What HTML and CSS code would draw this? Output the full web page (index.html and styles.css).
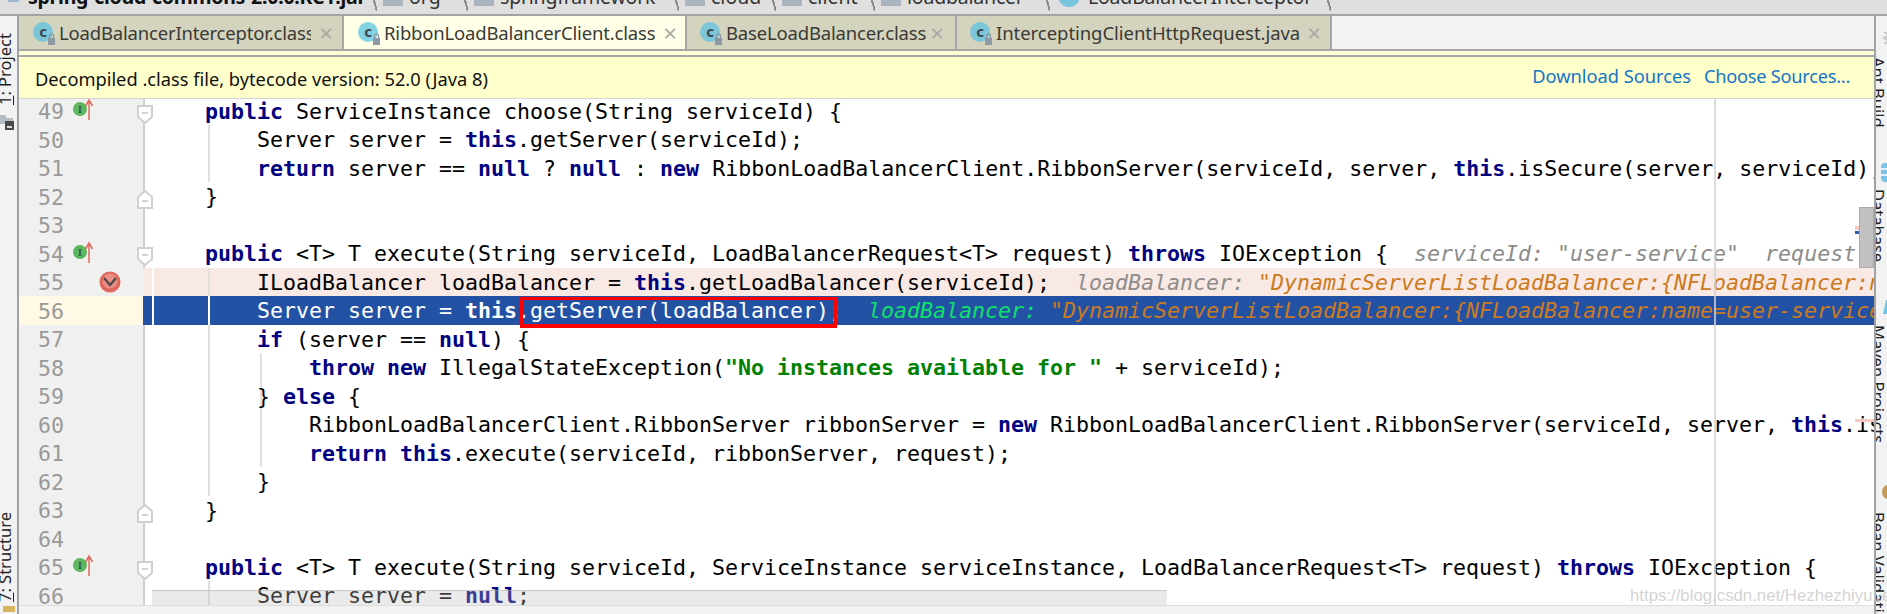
FILE: index.html
```html
<!DOCTYPE html>
<html lang="en">
<head>
<meta charset="utf-8">
<title>RibbonLoadBalancerClient.class</title>
<link rel="stylesheet" href="styles.css">
</head>
<body>
<div class="app">
  <nav class="crumbs">
    <div class="crumb-row">
      <svg class="crumb-jar" width="14" height="14" viewBox="0 0 14 14"><rect x="1" y="1" width="11" height="12" fill="#9fb7cf"/><rect x="4" y="3" width="5" height="8" fill="#e8eef4"/></svg>
      <b class="crumb-root">spring-cloud-commons-2.0.0.RC1.jar</b>
      <i class="sep s1"></i>
      <i class="fold-ic"></i><span class="crumb c-org">org</span>
      <i class="sep s2"></i>
      <i class="fold-ic"></i><span class="crumb c-spring">springframework</span>
      <i class="sep s3"></i>
      <i class="fold-ic"></i><span class="crumb c-cloud">cloud</span>
      <i class="sep s4"></i>
      <i class="fold-ic"></i><span class="crumb c-client">client</span>
      <i class="sep s5"></i>
      <i class="fold-ic"></i><span class="crumb c-lb">loadbalancer</span>
      <i class="sep s6"></i>
      <i class="class-ic"></i><span class="crumb c-int">LoadBalancerInterceptor</span>
      <i class="sep s7"></i>
    </div>
  </nav>
  <div class="main">
    <aside class="lstrip">
      <span class="vtext vleft v-project"><u>1</u>: Project</span>
      <svg class="proj-ic" width="15" height="18" viewBox="0 0 15 18"><path d="M0 3h5l2 3h6v6H0z" fill="#b7bdc4"/><rect x="5" y="9" width="9" height="9" fill="#4a4a4a"/><rect x="7" y="14" width="5" height="2" fill="#ddd"/></svg>
      <span class="vtext vleft v-structure"><u>7</u>: Structure</span>
      <svg class="struct-ic" width="14" height="6" viewBox="0 0 14 6"><rect x="1" y="0" width="12" height="6" fill="#d9b45c"/></svg>
    </aside>
    <section class="center">
      <div class="tabs">
        <div class="tab tab-1">
          <svg class="cls" width="26" height="24" viewBox="0 0 26 24"><circle cx="10" cy="10" r="10" fill="#7cc6da"/><text x="10" y="15" class="cls-c">c</text><rect x="15" y="16" width="7" height="7" fill="#8d9aa6"/><path d="M16.500 16v-2a2 2 0 0 1 4 0v2" fill="none" stroke="#8d9aa6" stroke-width="1.300"/></svg>
          <span class="tab-name name-1">LoadBalancerInterceptor.class</span>
          <span class="tab-x">×</span>
        </div>
        <div class="tab tab-2 active">
          <svg class="cls" width="26" height="24" viewBox="0 0 26 24"><circle cx="10" cy="10" r="10" fill="#84d3e4"/><text x="10" y="15" class="cls-c">c</text><rect x="15" y="16" width="7" height="7" fill="#8d9aa6"/><path d="M16.500 16v-2a2 2 0 0 1 4 0v2" fill="none" stroke="#8d9aa6" stroke-width="1.300"/></svg>
          <span class="tab-name name-2">RibbonLoadBalancerClient.class</span>
          <span class="tab-x">×</span>
        </div>
        <div class="tab tab-3">
          <svg class="cls" width="26" height="24" viewBox="0 0 26 24"><circle cx="10" cy="10" r="10" fill="#7cc6da"/><text x="10" y="15" class="cls-c">c</text><rect x="15" y="16" width="7" height="7" fill="#8d9aa6"/><path d="M16.500 16v-2a2 2 0 0 1 4 0v2" fill="none" stroke="#8d9aa6" stroke-width="1.300"/></svg>
          <span class="tab-name name-3">BaseLoadBalancer.class</span>
          <span class="tab-x">×</span>
        </div>
        <div class="tab tab-4">
          <svg class="cls" width="26" height="24" viewBox="0 0 26 24"><circle cx="10" cy="10" r="10" fill="#7cc6da"/><text x="10" y="15" class="cls-c">c</text><rect x="15" y="16" width="7" height="7" fill="#8d9aa6"/><path d="M16.500 16v-2a2 2 0 0 1 4 0v2" fill="none" stroke="#8d9aa6" stroke-width="1.300"/></svg>
          <span class="tab-name name-4">InterceptingClientHttpRequest.java</span>
          <span class="tab-x">×</span>
        </div>
      </div>
      <div class="band"></div>
      <div class="banner">
        <span class="banner-text">Decompiled .class file, bytecode version: 52.0 (Java 8)</span>
        <div class="banner-links"><a class="link">Download Sources</a><a class="link link-choose">Choose Sources...</a></div>
      </div>
      <div class="editor">
        <div class="rows">
          <div class="row"><div class="gutter"><span class="num">49</span><svg class="impl" width="24" height="24" viewBox="0 0 24 24"><circle cx="7" cy="12" r="7" fill="#5cb85f"/><text x="7" y="15.500" class="impl-i">I</text><path d="M16 23V4M12.500 9L16 3l3.500 6" fill="none" stroke="#e2695c" stroke-width="1.500"/></svg><svg class="fold fold-d" width="16" height="19" viewBox="0 0 16 19"><path d="M1 1h14v11l-7 6-7-6z" fill="#fff" stroke="#d0d0d0" stroke-width="2"/><path d="M5 8h6" stroke="#c4c4c4" stroke-width="1.500"/></svg></div><pre class="code">    <b>public</b> ServiceInstance choose(String serviceId) {</pre></div>
          <div class="row"><div class="gutter"><span class="num">50</span></div><pre class="code g1">        Server server = <b>this</b>.getServer(serviceId);</pre></div>
          <div class="row"><div class="gutter"><span class="num">51</span></div><pre class="code g1">        <b>return</b> server == <b>null</b> ? <b>null</b> : <b>new</b> RibbonLoadBalancerClient.RibbonServer(serviceId, server, <b>this</b>.isSecure(server, serviceId), this.serverIntrospector(serviceId).getMetadata(server));</pre></div>
          <div class="row"><div class="gutter"><span class="num">52</span><svg class="fold fold-u" width="16" height="19" viewBox="0 0 16 19"><path d="M1 18h14V7L8 1 1 7z" fill="#fff" stroke="#d0d0d0" stroke-width="2"/><path d="M5 11h6" stroke="#c4c4c4" stroke-width="1.500"/></svg></div><pre class="code">    }</pre></div>
          <div class="row"><div class="gutter"><span class="num">53</span></div><pre class="code"> </pre></div>
          <div class="row"><div class="gutter"><span class="num">54</span><svg class="impl" width="24" height="24" viewBox="0 0 24 24"><circle cx="7" cy="12" r="7" fill="#5cb85f"/><text x="7" y="15.500" class="impl-i">I</text><path d="M16 23V4M12.500 9L16 3l3.500 6" fill="none" stroke="#e2695c" stroke-width="1.500"/></svg><svg class="fold fold-d" width="16" height="19" viewBox="0 0 16 19"><path d="M1 1h14v11l-7 6-7-6z" fill="#fff" stroke="#d0d0d0" stroke-width="2"/><path d="M5 8h6" stroke="#c4c4c4" stroke-width="1.500"/></svg></div><pre class="code">    <b>public</b> &lt;T&gt; T execute(String serviceId, LoadBalancerRequest&lt;T&gt; request) <b>throws</b> IOException {  <em class="hint">serviceId: "user-service"  request: LoadBalancerRequest</em></pre></div>
          <div class="row row-bp"><div class="gutter"><span class="num">55</span><svg class="bp" width="22" height="22" viewBox="0 0 22 22"><circle cx="11" cy="11" r="10.500" fill="#e0665c"/><circle cx="11" cy="10" r="7.500" fill="#eb8d84"/><path d="M5 7l6 7 6-7" fill="none" stroke="#4a4a4a" stroke-width="2.200"/></svg></div><pre class="code g1">        ILoadBalancer loadBalancer = <b>this</b>.getLoadBalancer(serviceId);  <em class="hint">loadBalancer: <span class="val">"DynamicServerListLoadBalancer:{NFLoadBalancer:name=user-service</span></em></pre></div>
          <div class="row row-cur"><div class="gutter"><span class="num">56</span></div><pre class="code g1">        Server server = <b>this</b>.getServer(loadBalancer);  <em class="hint hint-cur">loadBalancer: <span class="val">"DynamicServerListLoadBalancer:{NFLoadBalancer:name=user-service,current list</span></em></pre></div>
          <div class="row"><div class="gutter"><span class="num">57</span></div><pre class="code g1">        <b>if</b> (server == <b>null</b>) {</pre></div>
          <div class="row"><div class="gutter"><span class="num">58</span></div><pre class="code g1 g2">            <b>throw</b> <b>new</b> IllegalStateException(<b class="str">"No instances available for "</b> + serviceId);</pre></div>
          <div class="row"><div class="gutter"><span class="num">59</span></div><pre class="code g1 g2">        } <b>else</b> {</pre></div>
          <div class="row"><div class="gutter"><span class="num">60</span></div><pre class="code g1 g2">            RibbonLoadBalancerClient.RibbonServer ribbonServer = <b>new</b> RibbonLoadBalancerClient.RibbonServer(serviceId, server, <b>this</b>.isSecure(server, serviceId), this.serverIntrospector(serviceId));</pre></div>
          <div class="row"><div class="gutter"><span class="num">61</span></div><pre class="code g1 g2">            <b>return</b> <b>this</b>.execute(serviceId, ribbonServer, request);</pre></div>
          <div class="row"><div class="gutter"><span class="num">62</span></div><pre class="code g1">        }</pre></div>
          <div class="row"><div class="gutter"><span class="num">63</span><svg class="fold fold-u" width="16" height="19" viewBox="0 0 16 19"><path d="M1 18h14V7L8 1 1 7z" fill="#fff" stroke="#d0d0d0" stroke-width="2"/><path d="M5 11h6" stroke="#c4c4c4" stroke-width="1.500"/></svg></div><pre class="code">    }</pre></div>
          <div class="row"><div class="gutter"><span class="num">64</span></div><pre class="code"> </pre></div>
          <div class="row"><div class="gutter"><span class="num">65</span><svg class="impl" width="24" height="24" viewBox="0 0 24 24"><circle cx="7" cy="12" r="7" fill="#5cb85f"/><text x="7" y="15.500" class="impl-i">I</text><path d="M16 23V4M12.500 9L16 3l3.500 6" fill="none" stroke="#e2695c" stroke-width="1.500"/></svg><svg class="fold fold-d" width="16" height="19" viewBox="0 0 16 19"><path d="M1 1h14v11l-7 6-7-6z" fill="#fff" stroke="#d0d0d0" stroke-width="2"/><path d="M5 8h6" stroke="#c4c4c4" stroke-width="1.500"/></svg></div><pre class="code">    <b>public</b> &lt;T&gt; T execute(String serviceId, ServiceInstance serviceInstance, LoadBalancerRequest&lt;T&gt; request) <b>throws</b> IOException {</pre></div>
          <div class="row"><div class="gutter"><span class="num">66</span></div><pre class="code g1">        Server server = <b>null</b>;</pre></div>
        </div>
        <div class="margin-line"></div>
        <div class="hbar"></div>
        <div class="mark mark-pink"></div>
        <div class="mark mark-blue"></div>
        <div class="mark mark-pink2"></div>
        <div class="thumb"></div>
        <div class="redbox"></div>
      </div>
      <div class="status"></div>
    </section>
    <aside class="rstrip">
      <svg class="r-ic ic-ant" width="11" height="18" viewBox="0 0 11 18"><path d="M3 2l5 3-5 3 5 3-5 3" fill="none" stroke="#c8c8c8" stroke-width="2"/></svg>
      <span class="vtext vright v-ant">Ant Build</span>
      <svg class="r-ic ic-db" width="11" height="19" viewBox="0 0 11 19"><rect x="0" y="0" width="11" height="19" rx="4" fill="#7cc3e6"/><path d="M0 6h11M0 12h11" stroke="#fff" stroke-width="1.500"/></svg>
      <span class="vtext vright v-db">Database</span>
      <svg class="r-ic ic-mvn" width="11" height="14" viewBox="0 0 11 14"><path d="M2 14L5 0h6v14" fill="#6fc4e8"/></svg>
      <span class="vtext vright v-mvn">Maven Projects</span>
      <svg class="r-ic ic-bean" width="11" height="14" viewBox="0 0 11 14"><ellipse cx="7" cy="7" rx="6" ry="7" fill="#c29a55"/></svg>
      <span class="vtext vright v-bean">Bean Validation</span>
    </aside>
  </div>
  <div class="watermark">https://blog.csdn.net/HezhezhiyuLe</div>
</div>
</body>
</html>
```

FILE: styles.css
```css
* { box-sizing: border-box; }
html, body { margin: 0; padding: 0; background: #f2f2f2; }
.app { position: relative; width: 1887px; height: 614px; overflow: hidden; display: flex; flex-direction: column; font-family: "Noto Sans", "Open Sans", sans-serif; color: #222; }

/* breadcrumb */
.crumbs { flex: 0 0 16px; height: 16px; background: #dfdfdf; border-bottom: 2px solid #a2a2a2; overflow: hidden; }
.crumb-row { display: flex; align-items: center; height: 28px; margin-top: -18px; padding-left: 7px; font-size: 19.500px; color: #333; white-space: nowrap; }
.crumb-jar { margin-right: 7px; flex: none; }
.crumb-root { color: #111; width: 340px; font-weight: 700; letter-spacing: -.25px; }
.sep { display: block; flex: none; width: 9px; height: 30px; background: linear-gradient(to top right, transparent 44%, #8e8e8e 44%, #8e8e8e 56%, transparent 56%); }
.fold-ic { display: block; flex: none; width: 20px; height: 20px; background: #aab4be; margin: 0 6px 0 6px; }
.class-ic { display: block; flex: none; width: 22px; height: 22px; border-radius: 50%; background: #78c4de; margin: 0 8px 0 8px; }
.crumb { display: block; flex: none; }
.c-org { width: 50px; }
.c-spring { width: 170px; }
.c-cloud { width: 56px; }
.c-client { width: 58px; }
.c-lb { width: 134px; }
.c-int { width: 234px; }
.c-lb, .c-int, .c-spring { letter-spacing: -.2px; }

.main { flex: 1; display: flex; min-height: 0; }

/* side strips */
.lstrip { flex: 0 0 19px; width: 19px; background: #f2f2f2; border-right: 2px solid #a2a2a2; display: flex; flex-direction: column; overflow: hidden; }
.rstrip { flex: 0 0 13px; width: 13px; background: #f2f2f2; border-left: 2px solid #a2a2a2; display: flex; flex-direction: column; overflow: hidden; }
.vtext { display: block; flex: none; white-space: nowrap; writing-mode: vertical-rl; font-size: 16.500px; line-height: 17px; color: #222; }
.vleft { transform: rotate(180deg); margin-left: -4px; }
.v-project { margin-top: 17px; }
.proj-ic { margin-top: 7px; flex: none; }
.v-structure { margin-top: 382px; }
.struct-ic { flex: none; margin: 4px 0 0 2px; }
.r-ic { flex: none; margin-left: 5px; }
.vright { margin-left: 5px; }
.ic-ant { margin-top: 14px; }
.v-ant { margin-top: 9px; height: 69px; }
.ic-db { margin-top: 37px; }
.v-db { margin-top: 7px; height: 68px; }
.ic-mvn { margin-top: 43px; }
.v-mvn { margin-top: 11px; height: 115px; }
.ic-bean { margin-top: 45px; }
.v-bean { margin-top: 13px; }

/* tabs */
.center { flex: 1; min-width: 0; display: flex; flex-direction: column; }
.tabs { flex: 0 0 35px; height: 35px; display: flex; background: #f2f2f2; border-bottom: 2px solid #a6a6a6; }
.tab { display: flex; align-items: center; flex: none; height: 33px; padding-left: 14px; background: #d4d3bd; border-right: 2px solid #a6a6a6; overflow: hidden; }
.tab.active { background: #ffffe8; }
.tab-1 { width: 325px; }
.tab-2 { width: 343px; }
.tab-3 { width: 270px; padding-left: 13px; }
.tab-4 { width: 375px; padding-left: 13px; }
.cls { flex: none; margin-top: 2px; }
.cls-c { font: 700 15px "Noto Sans", sans-serif; fill: #3a4650; text-anchor: middle; }
.tab-name { display: block; flex: none; font-size: 18.500px; line-height: 30px; letter-spacing: -.18px; color: #3a3a36; white-space: nowrap; overflow: hidden; }
.name-1 { width: 252px; }
.name-2 { width: 271px; }
.name-3 { width: 201px; }
.name-4 { width: 306px; letter-spacing: -.05px; }
.tab-x { flex: none; width: 14px; margin-left: 8px; font-size: 24px; line-height: 30px; color: #a9a9a4; font-weight: 400; text-align: center; }
.name-3 + .tab-x { margin-left: 3px; }
.name-4 + .tab-x { margin-left: 5px; }
.band { flex: 0 0 6px; height: 6px; background: #fdfdd6; border-bottom: 2px solid #a6a6a6; }

/* banner */
.banner { flex: 0 0 42px; height: 42px; background: #ffffcb; border-bottom: 1px solid #d4d4d4; display: flex; align-items: center; justify-content: space-between; padding: 0 24px 0 16px; font-size: 18.250px; color: #111; }
.banner-text { white-space: nowrap; margin-top: 1px; }
.banner-links { display: flex; gap: 13px; margin-top: -4px; }
.link { color: #1476c6; white-space: nowrap; }
.link-choose { letter-spacing: -.28px; }

/* editor */
.editor { position: relative; flex: 1; min-height: 0; overflow: hidden; background: #fff; }
.rows { margin-top: -2.500px; }
.row { display: flex; height: 28.500px; }
.gutter { position: relative; flex: 0 0 126px; width: 126px; height: 100%; background: #f0f0f0; border-right: 2px solid #cfcfcf; display: flex; align-items: center; padding-left: 19px; }
.num { flex: none; width: 26px; font: 21.600px/28.500px "DejaVu Sans Mono", monospace; color: #999; margin-top: 3px; }
.impl { flex: none; margin-left: 9px; margin-top: -3px; }
.impl-i { font: 700 10px "Liberation Serif", serif; fill: #355; text-anchor: middle; }
.bp { flex: none; margin-left: 35px; margin-top: 1px; }
.fold { position: absolute; right: -10px; z-index: 1; }
.fold-d { top: 8px; }
.fold-u { top: 8px; }
.code { flex: 1; min-width: 0; height: 100%; margin: 0; padding: 1px 0 0 8px; overflow: hidden; white-space: pre; font: 21.600px/28.500px "DejaVu Sans Mono", monospace; color: #000; --guide: #e0e0e0; --stripe: transparent; background:
  linear-gradient(var(--stripe), var(--stripe)) 7px 0 / 2px 100% no-repeat; }
.code b { color: #000080; font-weight: 700; }
.code b.str { color: #008000; }
.g1 { background:
  linear-gradient(var(--guide), var(--guide)) 63px 0 / 2px 100% no-repeat,
  linear-gradient(var(--stripe), var(--stripe)) 7px 0 / 2px 100% no-repeat; }
.g1.g2 { background:
  linear-gradient(var(--guide), var(--guide)) 63px 0 / 2px 100% no-repeat,
  linear-gradient(var(--guide), var(--guide)) 115px 0 / 2px 100% no-repeat; }
.hint { font-style: italic; color: #8c8c8c; }
.val { color: #cc7a1e; }
.hint-cur { color: #0ee06a; }
.row-bp .code { background-color: #f9e9e4; --stripe: #fff; --guide: #e6e0dc; }
.row-bp .gutter { border-right-color: #f9e9e4; }
.row-cur .code { background-color: #2352a5; color: #fff; --stripe: #fff; --guide: #fff; }
.row-cur .code b { color: #fff; }
.row-cur .gutter { background: #fff9e5; border-right-color: #2352a5; }
.margin-line { position: absolute; left: 1695px; top: 0; bottom: 0; width: 2px; background: rgba(210,210,210,.8); }
.hbar { position: absolute; left: 133px; width: 1015px; bottom: 0; height: 15px; background: rgba(190,190,190,.32); border-top: 1px solid rgba(170,170,170,.5); }
.thumb { position: absolute; left: 1840px; top: 108px; width: 15px; height: 61px; background: #c2c2c2; border: 1px solid #a8a8a8; }
.mark { position: absolute; left: 1836px; width: 19px; height: 3px; }
.mark-pink { top: 127px; background: #f6c9c4; height: 4px; }
.mark-blue { top: 132px; background: #2c5bab; height: 3px; width: 8px; }
.mark-pink2 { top: 320px; background: #f6c9c4; }
.redbox { position: absolute; left: 501px; top: 198px; width: 317px; height: 31px; border: 3px solid #f00; border-bottom-width: 4px; }
.status { flex: 0 0 9px; height: 9px; background: #f2f2f2; border-top: 1px solid #ddd; }
.watermark { position: absolute; left: 1630px; top: 584px; font: 16.800px/24px "Liberation Sans", sans-serif; color: rgba(200,200,200,.8); white-space: nowrap; }
```
